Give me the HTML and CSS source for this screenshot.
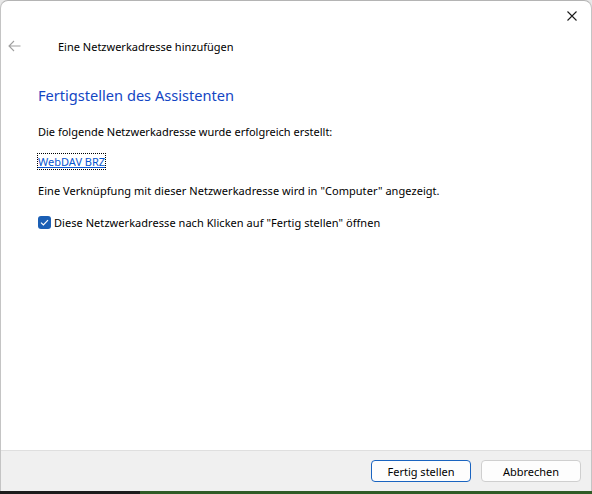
FILE: index.html
```html
<!DOCTYPE html>
<html lang="de">
<head>
<meta charset="utf-8">
<title>Eine Netzwerkadresse hinzufügen</title>
<link rel="stylesheet" href="styles.css">
</head>
<body>
<div class="screen">
  <div class="window">
    <div class="titlebar">
      <button class="close" aria-label="Schließen">
        <svg width="10" height="10" viewBox="0 0 10 10"><path d="M0.5 0.5 L9.5 9.5 M9.5 0.5 L0.5 9.5" stroke="#1b1b1b" stroke-width="1.1" fill="none"/></svg>
      </button>
    </div>
    <div class="header">
      <span class="back">
        <svg width="13" height="12" viewBox="0 0 13 12"><path d="M12.5 6 H1 M6 1 L1 6 L6 11" stroke="#a0a0a0" stroke-width="1.1" fill="none"/></svg>
      </span>
      <span class="wiztitle">Eine Netzwerkadresse hinzufügen</span>
    </div>
    <div class="content">
      <h1 class="instruction">Fertigstellen des Assistenten</h1>
      <p class="text first">Die folgende Netzwerkadresse wurde erfolgreich erstellt:</p>
      <p class="text linkrow"><a class="link" href="#">WebDAV BRZ</a></p>
      <p class="text wide">Eine Verknüpfung mit dieser Netzwerkadresse wird in "Computer" angezeigt.</p>
      <label class="check">
        <span class="box">
          <svg width="9" height="7" viewBox="0 0 9 7"><path d="M1 3.6 L3.4 6 L8 1.2" stroke="#fff" stroke-width="1.2" fill="none"/></svg>
        </span>
        <span class="wide">Diese Netzwerkadresse nach Klicken auf "Fertig stellen" öffnen</span>
      </label>
    </div>
    <div class="footer">
      <button class="btn default">Fertig stellen</button>
      <button class="btn">Abbrechen</button>
    </div>
  </div>
  <div class="taskbar">
    <div class="tb-dark"></div>
    <div class="tb-green"></div>
  </div>
</div>
</body>
</html>
```
FILE: styles.css
```css
* { box-sizing: border-box; }
html, body { margin: 0; padding: 0; }
body {
  width: 592px;
  height: 494px;
  overflow: hidden;
  background: #e8e8e8;
  font-family: "Noto Sans", "Open Sans", sans-serif;
  font-size: 11px;
  color: #000;
}
.screen {
  display: flex;
  flex-direction: column;
  height: 494px;
}
.window {
  height: 491px;
  background: #fff;
  border-top: 1px solid #b4b4b4;
  border-right: 1px solid #c4c4c4;
  border-left: 1px solid #c4c4c4;
  border-radius: 8px 8px 0 0;
  display: flex;
  flex-direction: column;
  overflow: hidden;
}
.titlebar {
  height: 30px;
  display: flex;
  justify-content: flex-end;
  align-items: flex-start;
}
.close {
  border: 0;
  background: transparent;
  padding: 0;
  width: 46px;
  height: 30px;
  display: flex;
  align-items: center;
  justify-content: center;
  margin-right: -4px;
}
.close svg { margin-top: -1px; }
.header {
  height: 30px;
  display: flex;
  align-items: center;
}
.back {
  width: 57px;
  display: flex;
  padding-left: 7px;
  margin-top: -1px;
}
.wiztitle {
  font-size: 11px;
  color: #000;
}
.content {
  flex: 1;
  padding-left: 37px;
}
.instruction {
  margin: 23px 0 0 0;
  font-size: 14.6px;
  font-weight: normal;
  color: #1346c4;
  line-height: 22px;
}
.text {
  margin: 0;
  line-height: 16px;
}
.wide { letter-spacing: 0.05px; }
.text.first { margin-top: 18px; }
.linkrow { margin-top: 14px; }
.link {
  color: #0a57d0;
  text-decoration: underline;
  outline: 1px dotted #000;
  outline-offset: 0;
}
.linkrow + .text { margin-top: 13px; }
.check {
  display: flex;
  align-items: center;
  gap: 3px;
  margin-top: 16px;
}
.box {
  width: 13px;
  height: 13px;
  border-radius: 3px;
  background: #1b5fb5;
  display: flex;
  align-items: center;
  justify-content: center;
}
.footer {
  height: 41px;
  background: #f0f0f0;
  border-top: 1px solid #dfdfdf;
  display: flex;
  justify-content: flex-end;
  align-items: center;
  gap: 10px;
  padding-right: 10px;
}
.btn {
  width: 100px;
  height: 22px;
  font-family: inherit;
  font-size: 11px;
  color: #000;
  background: #fdfdfd;
  border: 1px solid #cfcfcf;
  border-radius: 4px;
  padding: 0;
}
.btn.default {
  border-color: #1a64c0;
}
.taskbar {
  height: 3px;
  display: flex;
}
.tb-dark { width: 140px; background: #1c1c1c; }
.tb-green { flex: 1; background: #2f5c26; }
```
